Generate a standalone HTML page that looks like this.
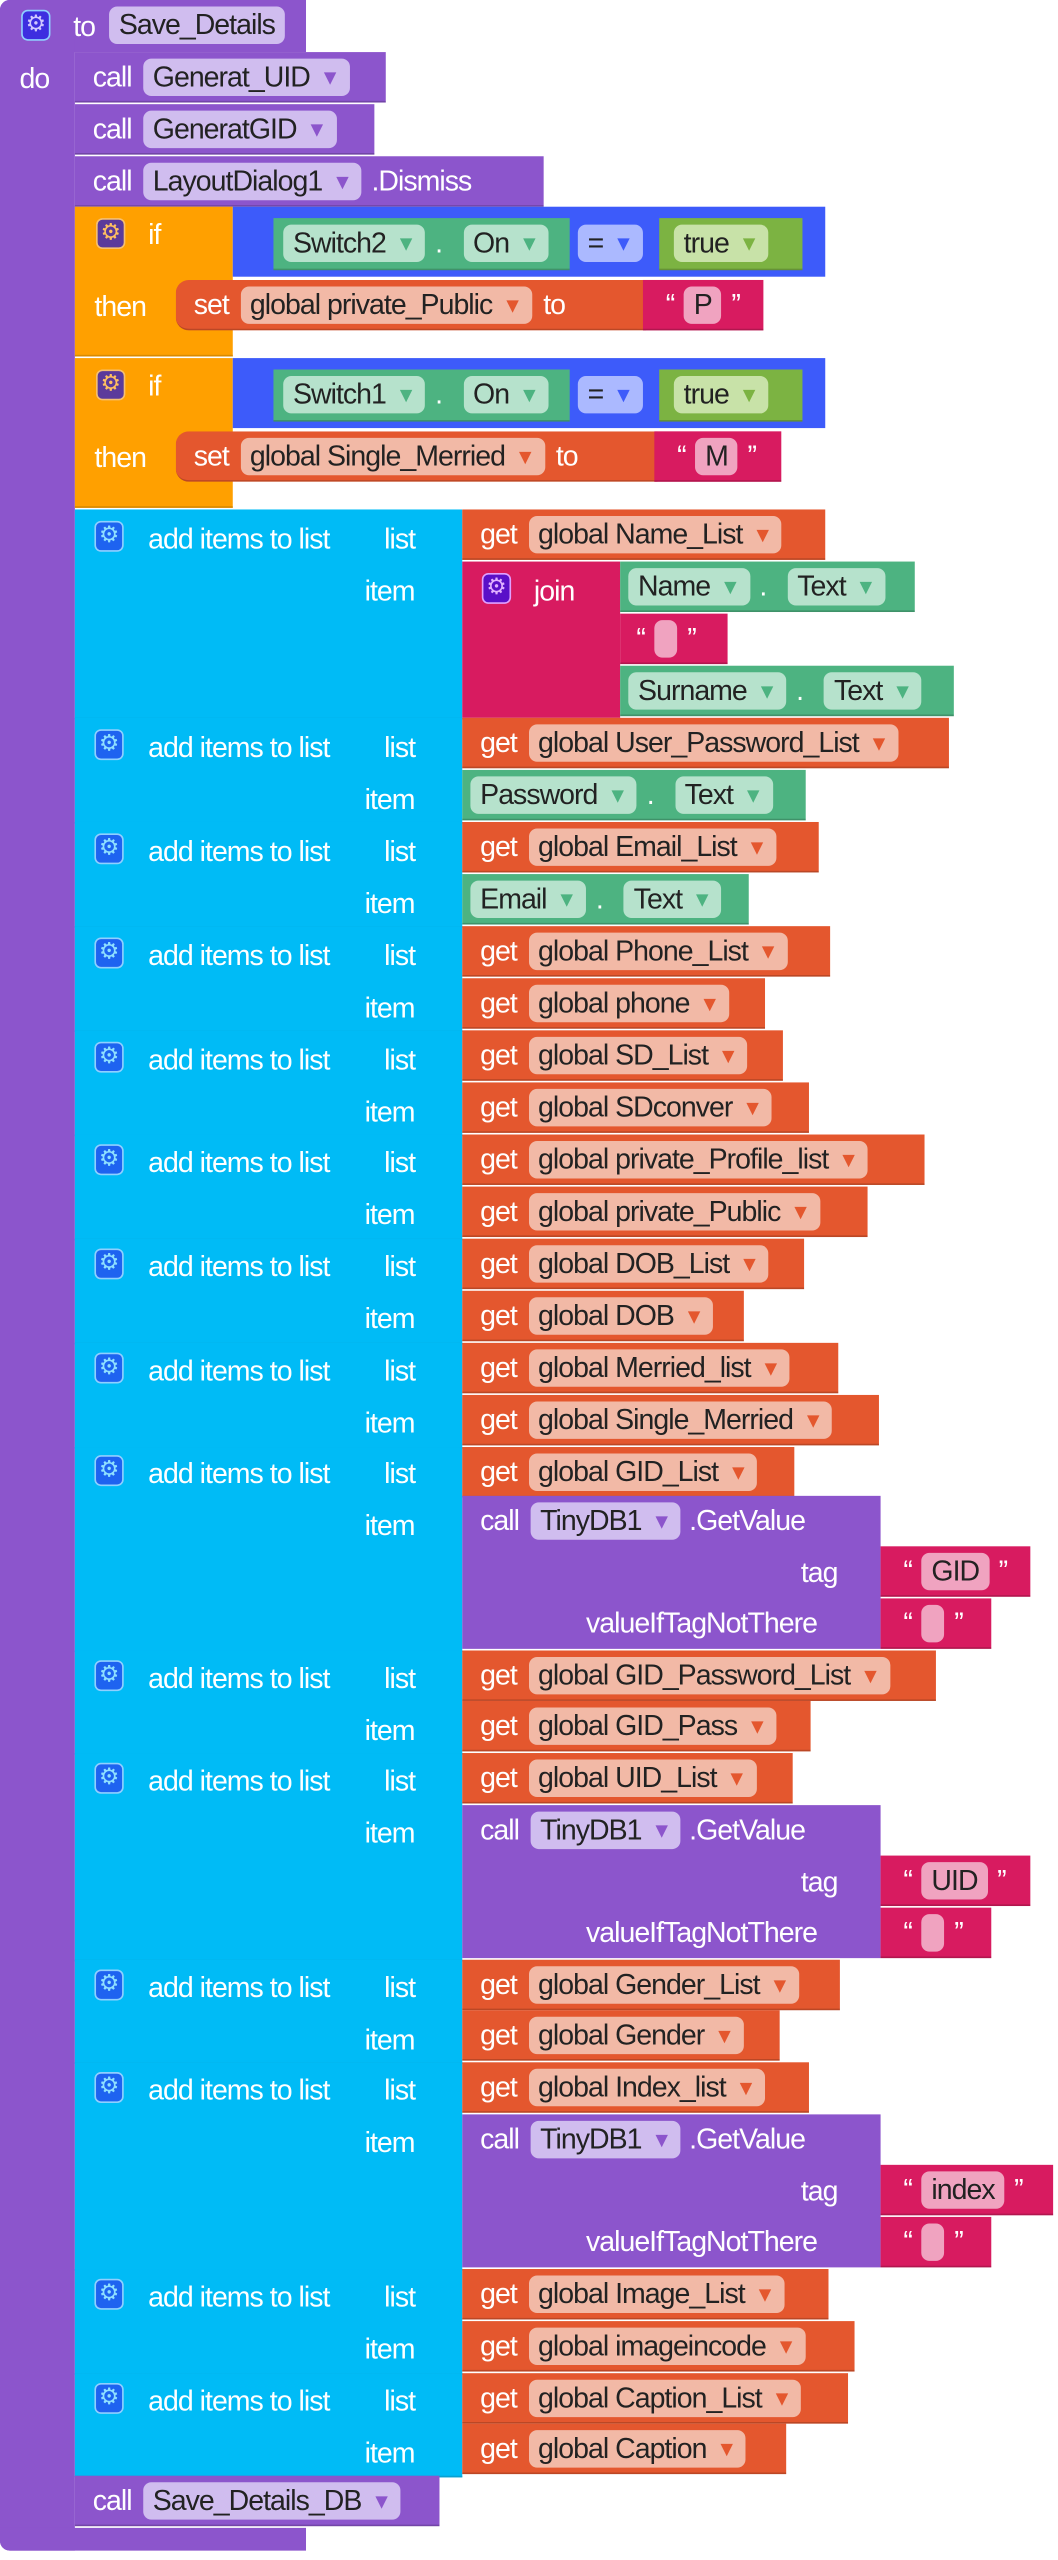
<!DOCTYPE html>
<html><head><meta charset="utf-8"><style>
html,body{margin:0;padding:0;background:#fff;width:1058px;height:2560px;overflow:hidden}
#w{position:absolute;left:0;top:0;width:650px;height:1573px;transform:scale(1.6277);transform-origin:0 0;font-family:"Liberation Sans",sans-serif;font-size:17.5px;letter-spacing:-0.6px}
.a{position:absolute;box-sizing:border-box}
.v{position:absolute;height:31px;display:flex;align-items:center;padding-left:11px;box-sizing:border-box;color:#fff;white-space:nowrap;border-bottom:1px solid rgba(0,0,0,.18)}
.pl{color:#222;border-radius:5px;padding:0 6px;height:23px;line-height:23px;margin-left:7px;display:inline-block}
.pl:first-child{margin-left:0}
i{font-style:normal;font-size:13px;margin-left:6px;position:relative;top:-1px}
.get{background:#e4572e}.get .pl{background:#f2b9a6}.get i{color:#e4572e}
.cmp{background:#4db381}.cmp .pl{background:#b6e2cc}.cmp i{color:#4db381}
.str{background:#d81b60;padding-left:14px}.str .pl{background:#f0a3c0;margin:0 6px}
.cal{background:#8c55cc}.cal .pl{background:#d0bdef}.cal i{color:#8c55cc}
.cy{position:absolute;left:46px;width:238px;background:#00bbf6;border-bottom:1px solid #0aa0d0}
.lbl{position:absolute;color:#fff;white-space:nowrap;margin-top:2px}
.g{position:absolute;width:18px;height:19px;border-radius:4px;background:#1e63f0;border:1px solid #8fd0ff;box-sizing:border-box;color:#8fe0ff;font-size:14px;line-height:17px;text-align:center;font-family:"DejaVu Sans",sans-serif;letter-spacing:0}
.dot{margin:0 6px}
</style></head><body><div id="w">

<div class="a" style="left:0;top:0;width:188px;height:32px;background:#8c55cc;border-radius:6px 0 0 0"></div>
<div class="a" style="left:0;top:0;width:46px;height:1567px;background:#8c55cc;border-radius:6px 0 0 6px"></div>
<div class="a" style="left:0;top:1553px;width:188px;height:14px;background:#8c55cc;border-radius:0 0 0 6px"></div>
<div class="g" style="left:13px;top:6px;background:#3d2ee0;color:#d0c8ff">⚙</div>
<div class="lbl" style="left:45px;top:4px">to</div>
<div class="a pl" style="left:67px;top:4px;background:#d0bdef;margin:0">Save_Details</div>
<div class="lbl" style="left:12px;top:36px">do</div>

<div class="v cal" style="left:46px;top:32px;width:191px"><span>call</span><span class="pl">Generat_UID<i>▼</i></span></div>
<div class="v cal" style="left:46px;top:64px;width:184px"><span>call</span><span class="pl">GeneratGID<i>▼</i></span></div>
<div class="v cal" style="left:46px;top:96px;width:288px"><span>call</span><span class="pl">LayoutDialog1<i>▼</i></span><span style="margin-left:6px">.Dismiss</span></div>

<div class="a" style="left:46px;top:127px;width:97px;height:92px;background:#ffa000;border-bottom:1px solid #d88a00"></div>
<div class="g" style="left:59px;top:134px;background:#5b3a9b;border-color:#f6c070;color:#ffc060">⚙</div>
<div class="lbl" style="left:91px;top:132px">if</div>
<div class="lbl" style="left:58px;top:176px">then</div>
<div class="a" style="left:143px;top:127px;width:364px;height:43px;background:#3d5bfa"></div>
<div class="v cmp" style="left:168px;top:134px;width:182px;height:32px;padding-left:6px"><span class="pl">Switch2<i>▼</i></span><span class="dot">.</span><span class="pl">On<i>▼</i></span></div>
<div class="a pl" style="left:355px;top:138px;background:#abb9ff;margin:0">=<i style="color:#3d5bfa">▼</i></div>
<div class="v" style="left:405px;top:134px;width:88px;height:32px;background:#7cb342;padding-left:9px"><span class="pl" style="background:#c8e2a8">true<i style="color:#7cb342">▼</i></span></div>
<div class="v get" style="left:108px;top:172px;width:289px;border-radius:8px 0 0 8px"><span>set</span><span class="pl">global private_Public<i>▼</i></span><span style="margin-left:7px">to</span></div>
<div class="v str" style="left:395px;top:172px;width:74px">“<span class="pl">P</span>”</div>

<div class="a" style="left:46px;top:220px;width:97px;height:92px;background:#ffa000;border-bottom:1px solid #d88a00"></div>
<div class="g" style="left:59px;top:227px;background:#5b3a9b;border-color:#f6c070;color:#ffc060">⚙</div>
<div class="lbl" style="left:91px;top:225px">if</div>
<div class="lbl" style="left:58px;top:269px">then</div>
<div class="a" style="left:143px;top:220px;width:364px;height:43px;background:#3d5bfa"></div>
<div class="v cmp" style="left:168px;top:227px;width:182px;height:32px;padding-left:6px"><span class="pl">Switch1<i>▼</i></span><span class="dot">.</span><span class="pl">On<i>▼</i></span></div>
<div class="a pl" style="left:355px;top:231px;background:#abb9ff;margin:0">=<i style="color:#3d5bfa">▼</i></div>
<div class="v" style="left:405px;top:227px;width:88px;height:32px;background:#7cb342;padding-left:9px"><span class="pl" style="background:#c8e2a8">true<i style="color:#7cb342">▼</i></span></div>
<div class="v get" style="left:108px;top:265px;width:296px;border-radius:8px 0 0 8px"><span>set</span><span class="pl">global Single_Merried<i>▼</i></span><span style="margin-left:7px">to</span></div>
<div class="v str" style="left:402px;top:265px;width:78px">“<span class="pl">M</span>”</div>

<div class="cy" style="top:313px;height:128px"></div>
<div class="cy" style="top:441px;height:64px"></div>
<div class="cy" style="top:505px;height:64px"></div>
<div class="cy" style="top:569px;height:64px"></div>
<div class="cy" style="top:633px;height:64px"></div>
<div class="cy" style="top:697px;height:64px"></div>
<div class="cy" style="top:761px;height:64px"></div>
<div class="cy" style="top:825px;height:64px"></div>
<div class="cy" style="top:889px;height:125px"></div>
<div class="cy" style="top:1014px;height:63px"></div>
<div class="cy" style="top:1077px;height:127px"></div>
<div class="cy" style="top:1204px;height:63px"></div>
<div class="cy" style="top:1267px;height:127px"></div>
<div class="cy" style="top:1394px;height:64px"></div>
<div class="cy" style="top:1458px;height:63px"></div>

<div class="g" style="left:58px;top:320px">⚙</div><div class="lbl" style="left:91px;top:319px">add items to list</div><div class="lbl" style="left:236px;top:319px">list</div><div class="lbl" style="left:224px;top:351px">item</div>
<div class="g" style="left:58px;top:448px">⚙</div><div class="lbl" style="left:91px;top:447px">add items to list</div><div class="lbl" style="left:236px;top:447px">list</div><div class="lbl" style="left:224px;top:479px">item</div>
<div class="g" style="left:58px;top:512px">⚙</div><div class="lbl" style="left:91px;top:511px">add items to list</div><div class="lbl" style="left:236px;top:511px">list</div><div class="lbl" style="left:224px;top:543px">item</div>
<div class="g" style="left:58px;top:576px">⚙</div><div class="lbl" style="left:91px;top:575px">add items to list</div><div class="lbl" style="left:236px;top:575px">list</div><div class="lbl" style="left:224px;top:607px">item</div>
<div class="g" style="left:58px;top:640px">⚙</div><div class="lbl" style="left:91px;top:639px">add items to list</div><div class="lbl" style="left:236px;top:639px">list</div><div class="lbl" style="left:224px;top:671px">item</div>
<div class="g" style="left:58px;top:703px">⚙</div><div class="lbl" style="left:91px;top:702px">add items to list</div><div class="lbl" style="left:236px;top:702px">list</div><div class="lbl" style="left:224px;top:734px">item</div>
<div class="g" style="left:58px;top:767px">⚙</div><div class="lbl" style="left:91px;top:766px">add items to list</div><div class="lbl" style="left:236px;top:766px">list</div><div class="lbl" style="left:224px;top:798px">item</div>
<div class="g" style="left:58px;top:831px">⚙</div><div class="lbl" style="left:91px;top:830px">add items to list</div><div class="lbl" style="left:236px;top:830px">list</div><div class="lbl" style="left:224px;top:862px">item</div>
<div class="g" style="left:58px;top:894px">⚙</div><div class="lbl" style="left:91px;top:893px">add items to list</div><div class="lbl" style="left:236px;top:893px">list</div><div class="lbl" style="left:224px;top:925px">item</div>
<div class="g" style="left:58px;top:1020px">⚙</div><div class="lbl" style="left:91px;top:1019px">add items to list</div><div class="lbl" style="left:236px;top:1019px">list</div><div class="lbl" style="left:224px;top:1051px">item</div>
<div class="g" style="left:58px;top:1083px">⚙</div><div class="lbl" style="left:91px;top:1082px">add items to list</div><div class="lbl" style="left:236px;top:1082px">list</div><div class="lbl" style="left:224px;top:1114px">item</div>
<div class="g" style="left:58px;top:1210px">⚙</div><div class="lbl" style="left:91px;top:1209px">add items to list</div><div class="lbl" style="left:236px;top:1209px">list</div><div class="lbl" style="left:224px;top:1241px">item</div>
<div class="g" style="left:58px;top:1273px">⚙</div><div class="lbl" style="left:91px;top:1272px">add items to list</div><div class="lbl" style="left:236px;top:1272px">list</div><div class="lbl" style="left:224px;top:1304px">item</div>
<div class="g" style="left:58px;top:1400px">⚙</div><div class="lbl" style="left:91px;top:1399px">add items to list</div><div class="lbl" style="left:236px;top:1399px">list</div><div class="lbl" style="left:224px;top:1431px">item</div>
<div class="g" style="left:58px;top:1464px">⚙</div><div class="lbl" style="left:91px;top:1463px">add items to list</div><div class="lbl" style="left:236px;top:1463px">list</div><div class="lbl" style="left:224px;top:1495px">item</div>

<div class="v get" style="left:284px;top:313px;width:223px"><span>get</span><span class="pl">global Name_List<i>▼</i></span></div>
<div class="a" style="left:284px;top:345px;width:97px;height:96px;background:#d81b60"></div>
<div class="g" style="left:296px;top:352px;background:#5a10c8;border-color:#e0a0ff;color:#e0b0ff">⚙</div>
<div class="lbl" style="left:328px;top:351px">join</div>
<div class="v cmp" style="left:381px;top:345px;width:181px;padding-left:5px"><span class="pl">Name<i>▼</i></span><span class="dot">.</span><span class="pl">Text<i>▼</i></span></div>
<div class="v str" style="left:381px;top:377px;width:66px;padding-left:10px">“<span class="pl" style="width:2px"></span>”</div>
<div class="v cmp" style="left:381px;top:409px;width:205px;padding-left:5px"><span class="pl">Surname<i>▼</i></span><span class="dot">.</span><span class="pl">Text<i>▼</i></span></div>
<div class="v get" style="left:284px;top:441px;width:299px"><span>get</span><span class="pl">global User_Password_List<i>▼</i></span></div>
<div class="v cmp" style="left:284px;top:473px;width:211px;padding-left:5px"><span class="pl">Password<i>▼</i></span><span class="dot">.</span><span class="pl">Text<i>▼</i></span></div>
<div class="v get" style="left:284px;top:505px;width:219px"><span>get</span><span class="pl">global Email_List<i>▼</i></span></div>
<div class="v cmp" style="left:284px;top:537px;width:176px;padding-left:5px"><span class="pl">Email<i>▼</i></span><span class="dot">.</span><span class="pl">Text<i>▼</i></span></div>
<div class="v get" style="left:284px;top:569px;width:226px"><span>get</span><span class="pl">global Phone_List<i>▼</i></span></div>
<div class="v get" style="left:284px;top:601px;width:186px"><span>get</span><span class="pl">global phone<i>▼</i></span></div>
<div class="v get" style="left:284px;top:633px;width:197px"><span>get</span><span class="pl">global SD_List<i>▼</i></span></div>
<div class="v get" style="left:284px;top:665px;width:213px"><span>get</span><span class="pl">global SDconver<i>▼</i></span></div>
<div class="v get" style="left:284px;top:697px;width:284px"><span>get</span><span class="pl">global private_Profile_list<i>▼</i></span></div>
<div class="v get" style="left:284px;top:729px;width:249px"><span>get</span><span class="pl">global private_Public<i>▼</i></span></div>
<div class="v get" style="left:284px;top:761px;width:210px"><span>get</span><span class="pl">global DOB_List<i>▼</i></span></div>
<div class="v get" style="left:284px;top:793px;width:173px"><span>get</span><span class="pl">global DOB<i>▼</i></span></div>
<div class="v get" style="left:284px;top:825px;width:231px"><span>get</span><span class="pl">global Merried_list<i>▼</i></span></div>
<div class="v get" style="left:284px;top:857px;width:256px"><span>get</span><span class="pl">global Single_Merried<i>▼</i></span></div>
<div class="v get" style="left:284px;top:889px;width:204px"><span>get</span><span class="pl">global GID_List<i>▼</i></span></div>
<div class="a" style="left:284px;top:919px;width:257px;height:94px;background:#8c55cc"></div>
<div class="v cal" style="left:284px;top:919px;width:257px;border:0;background:none"><span>call</span><span class="pl">TinyDB1<i>▼</i></span><span style="margin-left:5px">.GetValue</span></div>
<div class="lbl" style="left:492px;top:954px">tag</div>
<div class="lbl" style="left:360px;top:985px">valueIfTagNotThere</div>
<div class="v str" style="left:541px;top:950px;width:92px">“<span class="pl">GID</span>”</div>
<div class="v str" style="left:541px;top:982px;width:68px;padding-left:14px">“<span class="pl" style="width:2px"></span>”</div>
<div class="v get" style="left:284px;top:1014px;width:291px"><span>get</span><span class="pl">global GID_Password_List<i>▼</i></span></div>
<div class="v get" style="left:284px;top:1045px;width:214px"><span>get</span><span class="pl">global GID_Pass<i>▼</i></span></div>
<div class="v get" style="left:284px;top:1077px;width:203px"><span>get</span><span class="pl">global UID_List<i>▼</i></span></div>
<div class="a" style="left:284px;top:1109px;width:257px;height:94px;background:#8c55cc"></div>
<div class="v cal" style="left:284px;top:1109px;width:257px;border:0;background:none"><span>call</span><span class="pl">TinyDB1<i>▼</i></span><span style="margin-left:5px">.GetValue</span></div>
<div class="lbl" style="left:492px;top:1144px">tag</div>
<div class="lbl" style="left:360px;top:1175px">valueIfTagNotThere</div>
<div class="v str" style="left:541px;top:1140px;width:92px">“<span class="pl">UID</span>”</div>
<div class="v str" style="left:541px;top:1172px;width:68px;padding-left:14px">“<span class="pl" style="width:2px"></span>”</div>
<div class="v get" style="left:284px;top:1204px;width:232px"><span>get</span><span class="pl">global Gender_List<i>▼</i></span></div>
<div class="v get" style="left:284px;top:1235px;width:195px"><span>get</span><span class="pl">global Gender<i>▼</i></span></div>
<div class="v get" style="left:284px;top:1267px;width:213px"><span>get</span><span class="pl">global Index_list<i>▼</i></span></div>
<div class="a" style="left:284px;top:1299px;width:257px;height:94px;background:#8c55cc"></div>
<div class="v cal" style="left:284px;top:1299px;width:257px;border:0;background:none"><span>call</span><span class="pl">TinyDB1<i>▼</i></span><span style="margin-left:5px">.GetValue</span></div>
<div class="lbl" style="left:492px;top:1334px">tag</div>
<div class="lbl" style="left:360px;top:1365px">valueIfTagNotThere</div>
<div class="v str" style="left:541px;top:1330px;width:106px">“<span class="pl">index</span>”</div>
<div class="v str" style="left:541px;top:1362px;width:68px;padding-left:14px">“<span class="pl" style="width:2px"></span>”</div>
<div class="v get" style="left:284px;top:1394px;width:225px"><span>get</span><span class="pl">global Image_List<i>▼</i></span></div>
<div class="v get" style="left:284px;top:1426px;width:241px"><span>get</span><span class="pl">global imageincode<i>▼</i></span></div>
<div class="v get" style="left:284px;top:1458px;width:237px"><span>get</span><span class="pl">global Caption_List<i>▼</i></span></div>
<div class="v get" style="left:284px;top:1489px;width:199px"><span>get</span><span class="pl">global Caption<i>▼</i></span></div>

<div class="v cal" style="left:46px;top:1521px;width:224px"><span>call</span><span class="pl">Save_Details_DB<i>▼</i></span></div>

</div></body></html>
